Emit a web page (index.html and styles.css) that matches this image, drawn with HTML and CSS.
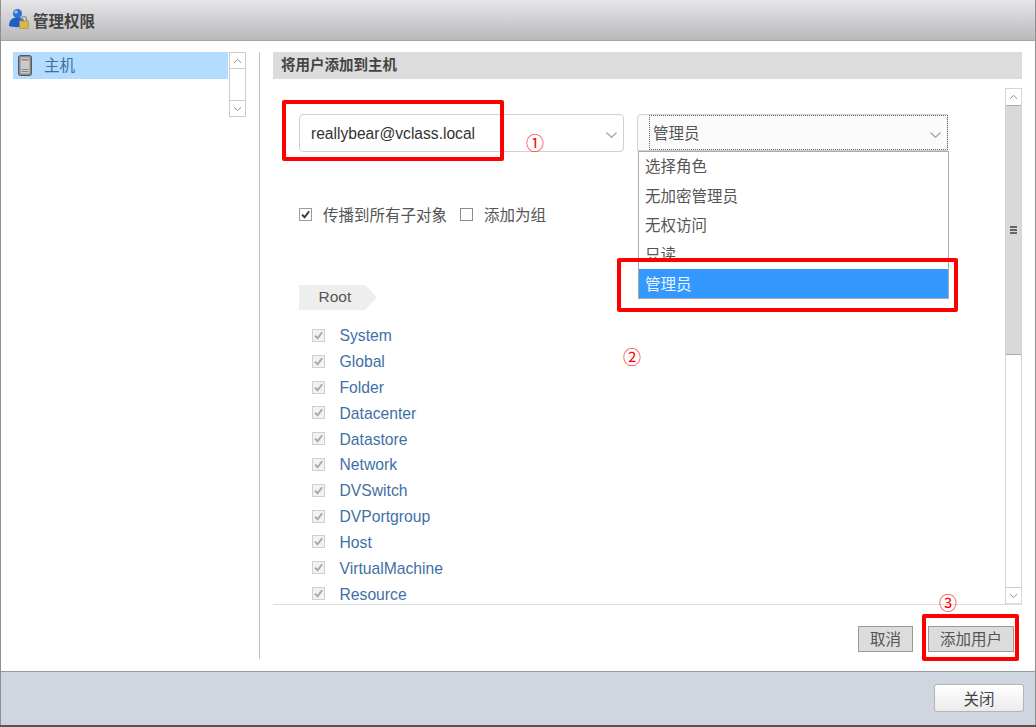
FILE: index.html
```html
<!DOCTYPE html>
<html lang="zh-CN">
<head>
<meta charset="utf-8">
<title>管理权限</title>
<link rel="stylesheet" href="styles.css">
</head>
<body>
<svg class="svg-defs" width="0" height="0" aria-hidden="true">
  <symbol id="chev-down" viewBox="0 0 14 8"><path d="M1.5 1.2 7 6.5l5.5-5.3" fill="none" stroke="currentColor" stroke-width="1.5"/></symbol>
  <symbol id="chev-up" viewBox="0 0 14 8"><path d="M1.5 6.8 7 1.5l5.5 5.3" fill="none" stroke="currentColor" stroke-width="1.5"/></symbol>
  <symbol id="tick" viewBox="0 0 12 12"><path d="M2.2 6.2 5 9l5-6.5" fill="none" stroke="currentColor" stroke-width="2"/></symbol>
</svg>
<div class="dialog">
  <header class="titlebar">
    <svg class="title-icon" viewBox="0 0 22 22" width="22" height="22" aria-hidden="true">
      <circle cx="9.500" cy="5.500" r="4.500" fill="#2a6fd6"/>
      <path d="M1 18c0-6 3-8.500 8.500-8.500S17 12 17 18c-3 1.500-13 1.500-16 0z" fill="#1f5fc8"/>
      <circle cx="8" cy="4" r="1.800" fill="#8fc0f5"/>
      <rect x="11.500" y="13" width="9" height="7.500" fill="#d9b64e" stroke="#a88a30" stroke-width=".6"/>
      <path d="M13.500 13v-2a2.500 2.500 0 0 1 5 0v2" fill="none" stroke="#8d8d8d" stroke-width="1.200"/>
    </svg>
    <h1 class="title">管理权限</h1>
  </header>
  <main class="main">
    <aside class="side">
      <div class="nav-item">
        <svg class="server-icon" viewBox="0 0 14 21" width="14" height="21" aria-hidden="true">
          <rect x=".5" y=".5" width="13" height="20" rx="2" fill="#8b8b8b" stroke="#555"/>
          <rect x="2.500" y="2.500" width="9" height="16" fill="#c9c9c9"/>
          <rect x="3.500" y="4" width="7" height="1.500" fill="#888"/>
          <rect x="3.500" y="14" width="7" height="1" fill="#888"/>
          <rect x="3.500" y="16" width="7" height="1" fill="#888"/>
        </svg>
        <span class="nav-text">主机</span>
      </div>
      <div class="mini-scroll">
        <span class="sb-btn"><svg class="sb-chev"><use href="#chev-up"/></svg></span>
        <span class="mini-track"></span>
        <span class="sb-btn"><svg class="sb-chev"><use href="#chev-down"/></svg></span>
      </div>
    </aside>
    <section class="panel">
      <h2 class="panel-head">将用户添加到主机</h2>
      <div class="scroll-area">
        <div class="form">
          <div class="select-row">
            <div class="select user-select">
              <span>reallybear@vclass.local</span>
              <svg class="sel-chev"><use href="#chev-down"/></svg>
            </div>
            <div class="select role-select">
              <div class="role-focus">
                <span>管理员</span>
                <svg class="sel-chev"><use href="#chev-down"/></svg>
              </div>
              <ul class="menu">
                <li>选择角色</li>
                <li>无加密管理员</li>
                <li>无权访问</li>
                <li>只读</li>
                <li class="menu-active">管理员</li>
              </ul>
            </div>
          </div>
          <div class="check-row">
            <span class="box on"><svg class="tick"><use href="#tick"/></svg></span>
            <span class="check-label">传播到所有子对象</span>
            <span class="box"></span>
            <span class="check-label">添加为组</span>
          </div>
          <div class="crumb">Root</div>
          <ul class="privs">
            <li><span class="box dis"><svg class="tick"><use href="#tick"/></svg></span>System</li>
            <li><span class="box dis"><svg class="tick"><use href="#tick"/></svg></span>Global</li>
            <li><span class="box dis"><svg class="tick"><use href="#tick"/></svg></span>Folder</li>
            <li><span class="box dis"><svg class="tick"><use href="#tick"/></svg></span>Datacenter</li>
            <li><span class="box dis"><svg class="tick"><use href="#tick"/></svg></span>Datastore</li>
            <li><span class="box dis"><svg class="tick"><use href="#tick"/></svg></span>Network</li>
            <li><span class="box dis"><svg class="tick"><use href="#tick"/></svg></span>DVSwitch</li>
            <li><span class="box dis"><svg class="tick"><use href="#tick"/></svg></span>DVPortgroup</li>
            <li><span class="box dis"><svg class="tick"><use href="#tick"/></svg></span>Host</li>
            <li><span class="box dis"><svg class="tick"><use href="#tick"/></svg></span>VirtualMachine</li>
            <li><span class="box dis"><svg class="tick"><use href="#tick"/></svg></span>Resource</li>
          </ul>
        </div>
        <div class="vscroll">
          <span class="sb-btn"><svg class="sb-chev"><use href="#chev-up"/></svg></span>
          <span class="thumb"><i></i><i></i><i></i></span>
          <span class="v-track"></span>
          <span class="sb-btn"><svg class="sb-chev"><use href="#chev-down"/></svg></span>
        </div>
      </div>
      <div class="actions">
        <button class="btn cancel">取消</button>
        <button class="btn add">添加用户</button>
      </div>
    </section>
  </main>
  <footer class="footer">
    <button class="close">关闭</button>
  </footer>
</div>
<div class="mark mark-1"></div>
<div class="mark mark-2"></div>
<div class="mark mark-3"></div>
<span class="num num-1">①</span>
<span class="num num-2">②</span>
<span class="num num-3">③</span>
</body>
</html>
```
FILE: styles.css
```css
* { box-sizing: border-box; }
html, body { margin: 0; padding: 0; }
body {
  position: relative;
  width: 1036px;
  height: 727px;
  overflow: hidden;
  background: #fff;
  font-family: "Liberation Sans", "Noto Sans CJK SC", sans-serif;
  font-size: 15.5px;
  color: #555;
}
.svg-defs { position: absolute; }
ul { list-style: none; margin: 0; padding: 0; }
h1, h2 { margin: 0; }

.dialog {
  display: flex;
  flex-direction: column;
  height: 725px;
  border-left: 1px solid #8f8f8f;
  border-right: 1px solid #8f8f8f;
  border-bottom: 0;
  box-shadow: 0 2px 0 #555;
}
.titlebar {
  display: flex;
  align-items: center;
  height: 41px;
  padding-left: 7px;
  background: linear-gradient(#e6e6e8, #b9b9bc);
  border-bottom: 1px solid #a6a6a6;
  flex: none;
}
.title-icon { margin-right: 3px; margin-top: -2px; }
.title { font-size: 15.5px; font-weight: 700; color: #444; }

.main { flex: 1; display: flex; min-height: 0; padding: 11px 0 12px; }
.side {
  width: 259px;
  flex: none;
  padding-left: 12px;
  display: flex;
  align-items: flex-start;
  border-right: 1px solid #c4c4c4;
}
.nav-item {
  width: 215px;
  height: 27px;
  display: flex;
  align-items: center;
  padding-left: 5px;
  background: #b3dcff;
  color: #3d6f9f;
  font-size: 15.5px;
}
.server-icon { margin-right: 12px; }
.nav-text { margin-top: -4px; }
.mini-scroll {
  width: 17px;
  height: 65px;
  margin-left: 1px;
  display: flex;
  flex-direction: column;
  border: 1px solid #ccc;
}
.sb-btn {
  flex: none;
  height: 16px;
  display: flex;
  align-items: center;
  justify-content: center;
  color: #888;
  background: #fff;
}
.mini-scroll .sb-btn:first-child { border-bottom: 1px solid #ccc; }
.mini-scroll .sb-btn:last-child { border-top: 1px solid #ccc; }
.mini-track { flex: 1; }
.sb-chev { width: 9px; height: 6px; }

.panel {
  width: 749px;
  margin-left: 13px;
  flex: none;
  display: flex;
  flex-direction: column;
}
.panel-head {
  height: 27px;
  flex: none;
  line-height: 27px;
  padding-left: 8px;
  background: #dcdcdc;
  font-size: 14.500px;
  font-weight: 700;
  color: #444;
}
.scroll-area {
  margin-top: 9px;
  height: 517px;
  flex: none;
  display: flex;
  border-bottom: 1px solid #ddd;
  overflow: hidden;
}
.form { flex: 1; min-width: 0; padding: 26px 0 0 26px; overflow: hidden; }
.select-row { display: flex; gap: 13px; }
.select {
  height: 38px;
  border: 1px solid #d2d2d2;
  border-radius: 4px;
  display: flex;
  align-items: center;
  position: relative;
}
.user-select {
  width: 325px;
  padding: 2px 0 0 11px;
  color: #333;
  font-size: 15.6px;
}
.sel-chev { position: absolute; right: 5px; top: 15px; width: 13px; height: 8px; color: #aaa; }
.user-select .sel-chev { right: 5px; top: 16px; }
.role-select { width: 311px; background: #fafafa; height: 37px; border-radius: 4px 0 0 0; }
.role-focus {
  position: absolute;
  left: 11px;
  top: 0;
  right: -1px;
  bottom: 0;
  border: 1px dotted #666;
  display: flex;
  align-items: center;
  padding-left: 3px;
  padding-bottom: 1px;
  color: #555;
}
.menu {
  position: absolute;
  z-index: 2;
  left: 0;
  top: 36px;
  width: 311px;
  height: 148px;
  border: 1px solid #aaa;
  background: #fff;
}
.menu li { height: 29px; line-height: 29px; padding-left: 6px; color: #555; }
.menu li:first-child { height: 30px; }
.menu .menu-active { background: #3399ff; color: #e8f4ff; height: 29px; line-height: 31px; }

.check-row {
  display: flex;
  align-items: center;
  height: 24px;
  margin-top: 50px;
}
.box {
  width: 13px;
  height: 13px;
  border: 1px solid #8c8c8c;
  background: #fff;
  display: inline-flex;
  align-items: center;
  justify-content: center;
  flex: none;
}
.box.on { border-color: #9a9a9a; color: #333; }
.tick { width: 11px; height: 11px; }
.check-row .check-label { margin-left: 11px; margin-right: 13px; color: #555; }
.crumb {
  width: 78px;
  height: 25px;
  margin-top: 59px;
  padding-left: 19.500px;
  line-height: 24px;
  background: #eee;
  color: #555;
  font-size: 15.500px;
  clip-path: polygon(0 0, 66px 0, 100% 50%, 66px 100%, 0 100%);
}
.privs { margin-top: 13.5px; margin-left: 13px; }
.privs li {
  height: 25.820px;
  display: flex;
  align-items: center;
  color: #3f70a5;
  font-size: 15.700px;
  white-space: nowrap;
}
.box.dis {
  width: 13px;
  height: 13px;
  margin: -2px 14.500px 0 0;
  border: 1px solid #cfcfcf;
  background: #f2f2f2;
  color: #a8a8a8;
}

.vscroll {
  width: 17px;
  flex: none;
  display: flex;
  flex-direction: column;
  border: 1px solid #d4d4d4;
  border-bottom: 1px solid #ddd;
  background: #fff;
}
.vscroll .sb-btn { height: 16px; }
.thumb {
  height: 250px;
  flex: none;
  background: #d9d9d9;
  border-top: 1px solid #aaa;
  border-bottom: 1px solid #aaa;
  display: flex;
  flex-direction: column;
  align-items: center;
  justify-content: center;
  gap: 1px;
}
.thumb i { width: 7px; height: 2px; background: #666; }
.v-track { flex: 1; }
.vscroll .sb-btn:last-child { border-top: 1px solid #ccc; }

.actions {
  display: flex;
  justify-content: flex-end;
  gap: 15px;
  padding: 21px 8px 0 0;
}
.btn {
  height: 26px;
  padding: 0 0 2px;
  border: 1px solid #999;
  background: #dcdcdc;
  font: inherit;
  color: #555;
}
.cancel { width: 55px; }
.add { width: 86px; }

.footer {
  flex: none;
  height: 54px;
  display: flex;
  justify-content: flex-end;
  padding: 12px 11px 0 0;
  background: #d0d6e0;
  border-top: 1px solid #999;
}
.close {
  width: 90px;
  height: 28px;
  padding: 0;
  border: 1px solid #b4b4b4;
  border-radius: 3px;
  background: linear-gradient(#fff, #ebebeb);
  font: inherit;
  color: #444;
}

.mark { position: absolute; z-index: 5; border: 4px solid #ff0000; border-radius: 2px; }
.mark-1 { left: 282px; top: 100px; width: 222px; height: 61px; }
.mark-2 { left: 617px; top: 258px; width: 341px; height: 54px; }
.mark-3 { left: 922px; top: 614px; width: 97px; height: 47px; }
.num {
  position: absolute;
  z-index: 5;
  width: 18px;
  color: #f00;
  font-family: "Noto Sans CJK SC", sans-serif;
  font-size: 18px;
  line-height: 18px;
  text-align: center;
}
.num-1 { left: 526px; top: 133px; }
.num-2 { left: 623px; top: 347px; }
.num-3 { left: 939px; top: 593px; }
```
